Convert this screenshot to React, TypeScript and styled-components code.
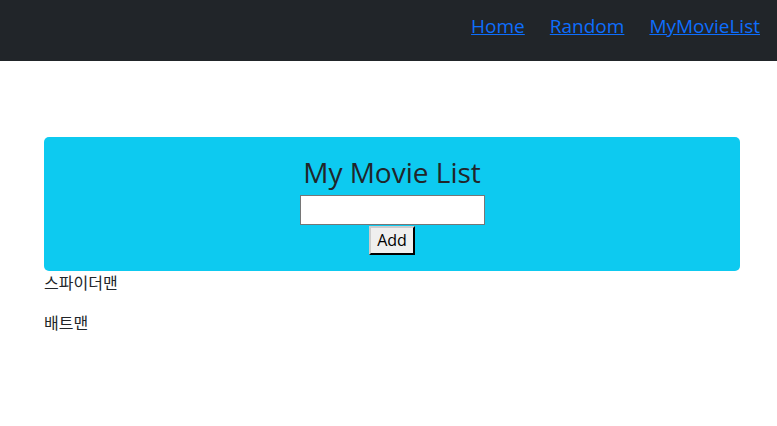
import React, { useState } from 'react';
import styled, { createGlobalStyle } from 'styled-components';

const GlobalStyle = createGlobalStyle`
  body {
    margin: 0;
    font-family: 'Open Sans', 'Noto Sans CJK KR', sans-serif;
    font-size: 16px;
    line-height: 1.5;
    color: #212529;
    background: #fff;
  }
`;

const NavBar = styled.nav`
  height: 61px;
  background: #212529;
  display: flex;
  align-items: center;
  justify-content: flex-end;
  padding: 0 17px 0 16px;
  gap: 25px;
`;

const NavLink = styled.a`
  color: #0d6efd;
  font-size: 19px;
  text-decoration: underline;
  padding-bottom: 8px;
`;

const Main = styled.main`
  padding: 76px 37px 0 44px;
`;

const Banner = styled.section`
  background: #0dcaf0;
  border-radius: 5px;
  padding: 19px 16px 16px;
  display: flex;
  flex-direction: column;
  align-items: center;
`;

const Title = styled.h1`
  margin: 0 0 5px;
  font-size: 28px;
  font-weight: 400;
  line-height: 1.2;
`;

const Input = styled.input`
  width: 185px;
  height: 30px;
  box-sizing: border-box;
  border: 1px solid #767676;
  font-size: 16px;
`;

const AddButton = styled.button`
  margin-top: 1px;
  height: 29px;
  font-family: inherit;
  font-size: 16px;
  padding: 0 6px;
  background: #efefef;
  border: 2px outset #333;
  border-color: #ccc #333 #333 #ccc;
`;

const Item = styled.p`
  margin: 0 0 16px;
`;

export default function App() {
  const [text, setText] = useState('');
  const [movies, setMovies] = useState(['스파이더맨', '배트맨']);

  return (
    <>
      <GlobalStyle />
      <NavBar>
        <NavLink href="#">Home</NavLink>
        <NavLink href="#">Random</NavLink>
        <NavLink href="#">MyMovieList</NavLink>
      </NavBar>
      <Main>
        <Banner>
          <Title>My Movie List</Title>
          <Input value={text} onChange={e => setText(e.target.value)} />
          <AddButton
            type="button"
            onClick={() => {
              if (text) setMovies(prev => [...prev, text]);
              setText('');
            }}
          >
            Add
          </AddButton>
        </Banner>
        {movies.map((m, idx) => (
          <Item key={idx}>{m}</Item>
        ))}
      </Main>
    </>
  );
}
